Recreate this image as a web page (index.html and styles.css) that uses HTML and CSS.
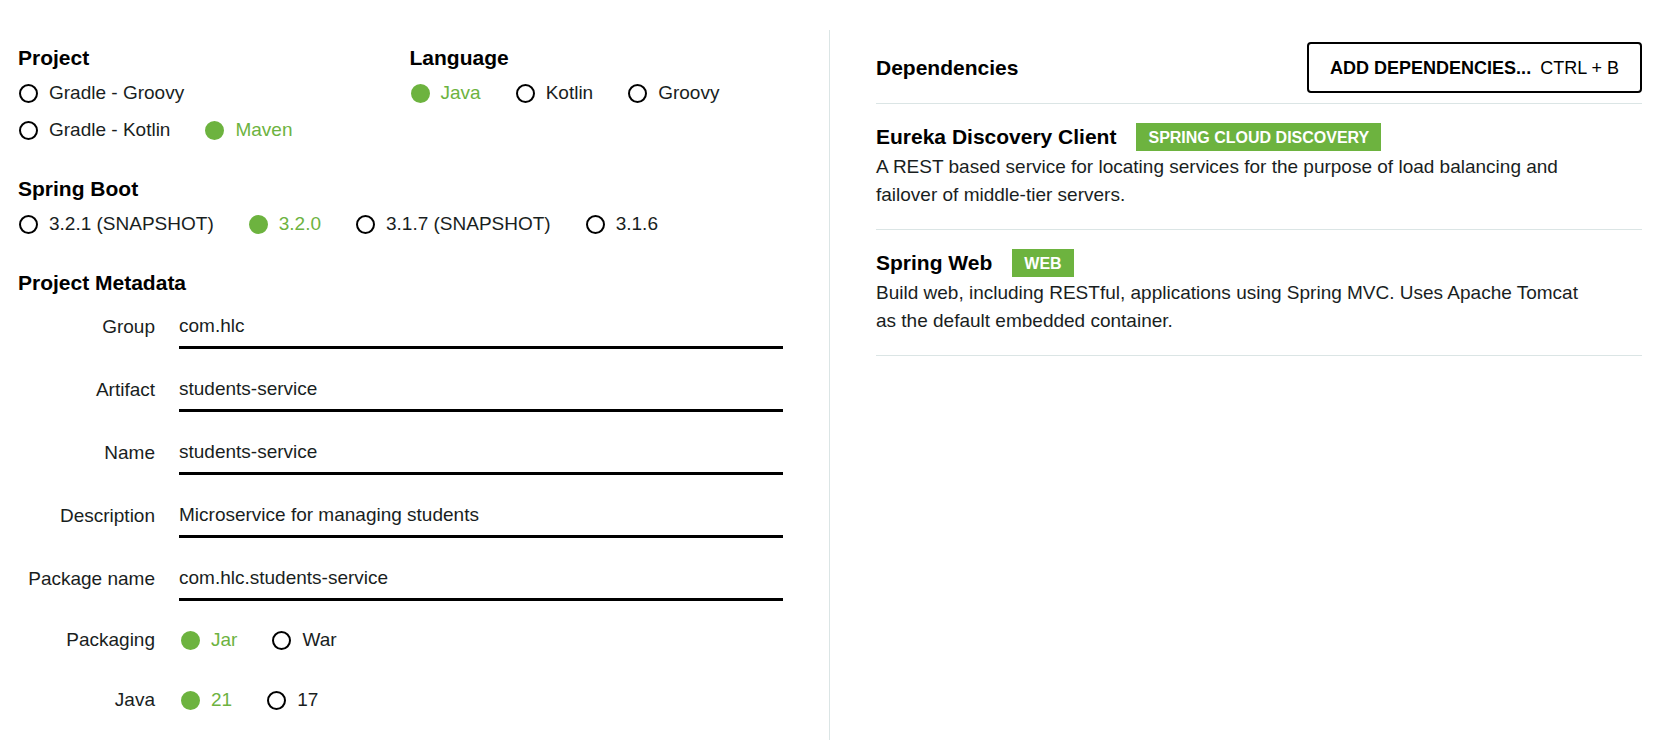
FILE: index.html
```html
<!DOCTYPE html>
<html lang="en">
<head>
<meta charset="utf-8">
<title>Spring Initializr</title>
<link rel="stylesheet" href="styles.css">
</head>
<body>
<main class="layout">
  <form class="settings">
    <div class="split">
      <fieldset class="group">
        <legend class="heading">Project</legend>
        <div class="options">
          <label class="option"><input type="radio" name="project"><span>Gradle - Groovy</span></label>
          <label class="option"><input type="radio" name="project"><span>Gradle - Kotlin</span></label>
          <label class="option"><input type="radio" name="project" checked><span>Maven</span></label>
        </div>
      </fieldset>
      <fieldset class="group">
        <legend class="heading">Language</legend>
        <div class="options">
          <label class="option"><input type="radio" name="language" checked><span>Java</span></label>
          <label class="option"><input type="radio" name="language"><span>Kotlin</span></label>
          <label class="option"><input type="radio" name="language"><span>Groovy</span></label>
        </div>
      </fieldset>
    </div>
    <fieldset class="group">
      <legend class="heading">Spring Boot</legend>
      <div class="options">
        <label class="option"><input type="radio" name="boot"><span>3.2.1 (SNAPSHOT)</span></label>
        <label class="option"><input type="radio" name="boot" checked><span>3.2.0</span></label>
        <label class="option"><input type="radio" name="boot"><span>3.1.7 (SNAPSHOT)</span></label>
        <label class="option"><input type="radio" name="boot"><span>3.1.6</span></label>
      </div>
    </fieldset>
    <section>
      <h2 class="heading">Project Metadata</h2>
      <div class="fields">
        <div class="field"><label class="field-label" for="group">Group</label><input class="text" id="group" type="text" value="com.hlc"></div>
        <div class="field"><label class="field-label" for="artifact">Artifact</label><input class="text" id="artifact" type="text" value="students-service"></div>
        <div class="field"><label class="field-label" for="name">Name</label><input class="text" id="name" type="text" value="students-service"></div>
        <div class="field"><label class="field-label" for="description">Description</label><input class="text" id="description" type="text" value="Microservice for managing students"></div>
        <div class="field"><label class="field-label" for="package">Package name</label><input class="text" id="package" type="text" value="com.hlc.students-service"></div>
        <div class="field choice" role="radiogroup" aria-labelledby="packaging-label">
          <span class="field-label" id="packaging-label">Packaging</span>
          <div class="options">
            <label class="option"><input type="radio" name="packaging" checked><span>Jar</span></label>
            <label class="option"><input type="radio" name="packaging"><span>War</span></label>
          </div>
        </div>
        <div class="field choice" role="radiogroup" aria-labelledby="java-label">
          <span class="field-label" id="java-label">Java</span>
          <div class="options">
            <label class="option"><input type="radio" name="java" checked><span>21</span></label>
            <label class="option"><input type="radio" name="java"><span>17</span></label>
          </div>
        </div>
      </div>
    </section>
  </form>
  <section class="dependencies">
    <header class="dep-header">
      <h2 class="heading">Dependencies</h2>
      <button class="add" type="button"><strong>Add dependencies...</strong><span>Ctrl + B</span></button>
    </header>
    <ul class="dep-list">
      <li class="dep">
        <div class="dep-title"><h3 class="heading">Eureka Discovery Client</h3><span class="tag">Spring Cloud Discovery</span></div>
        <p class="dep-text">A REST based service for locating services for the purpose of load balancing and failover of middle-tier servers.</p>
      </li>
      <li class="dep">
        <div class="dep-title"><h3 class="heading">Spring Web</h3><span class="tag">Web</span></div>
        <p class="dep-text">Build web, including RESTful, applications using Spring MVC. Uses Apache Tomcat as the default embedded container.</p>
      </li>
    </ul>
  </section>
</main>
</body>
</html>
```
FILE: styles.css
```css
:root {
  --green: #6db33f;
  --line: #dbe5e5;
  --text: #191e1e;
}

* {
  box-sizing: border-box;
}

body {
  margin: 0;
  background: #fff;
  color: var(--text);
  font: 19px/28px "Liberation Sans", Arial, sans-serif;
}

.layout {
  display: grid;
  grid-template-columns: 1fr 1fr;
  min-height: 100vh;
  padding: 30px 36px 0 18px;
}

.settings {
  padding: 14px 46px 16px 0;
  border-right: 1px solid var(--line);
}

.heading {
  margin: 0;
  padding: 0;
  color: #000;
  font-size: 21px;
  font-weight: bold;
  line-height: 28px;
}

.split {
  display: grid;
  grid-template-columns: 1fr 1fr;
  gap: 18px;
}

.group {
  min-width: 0;
  margin: 0 0 31px;
  padding: 0;
  border: 0;
}

.options {
  display: flex;
  flex-wrap: wrap;
  align-content: start;
  row-gap: 9px;
  padding-left: 1px;
}

.group .options {
  padding-top: 7px;
}

.option {
  display: flex;
  align-items: center;
  gap: 11px;
  margin-right: 35px;
  cursor: pointer;
}

.option input {
  appearance: none;
  width: 19px;
  height: 19px;
  margin: 0;
  border: 2px solid #000;
  border-radius: 50%;
}

.option input:checked {
  border-color: var(--green);
  background: var(--green);
}

.option input:checked + span {
  color: var(--green);
}

.fields {
  display: grid;
  gap: 25px;
  padding-top: 14px;
}

.field {
  display: grid;
  grid-template-columns: 137px 1fr;
  column-gap: 24px;
}

.choice {
  min-height: 35px;
}

.choice .options {
  padding-left: 2px;
}

.field-label {
  text-align: right;
}

label.field-label {
  padding-top: 2px;
}

.text {
  width: 100%;
  min-width: 0;
  height: 38px;
  padding: 1px 0 6px;
  border: 0;
  border-bottom: 3px solid #000;
  background: none;
  color: inherit;
  font: inherit;
}

.dependencies {
  min-width: 0;
  padding: 12px 0 20px 46px;
}

.dep-header {
  display: flex;
  align-items: center;
  justify-content: space-between;
  padding-bottom: 10px;
  border-bottom: 1px solid var(--line);
}

.add {
  display: flex;
  gap: 9px;
  padding: 10px 21px 9px;
  border: 2px solid #000;
  border-radius: 4px;
  background: #fff;
  color: #000;
  font: inherit;
  font-size: 18px;
  text-transform: uppercase;
}

.dep-list {
  margin: 0;
  padding: 0;
  list-style: none;
}

.dep {
  padding: 19px 50px 20px 0;
  border-bottom: 1px solid var(--line);
}

.dep-title {
  display: flex;
  align-items: center;
  gap: 20px;
}

.tag {
  padding: 2px 12px 0;
  background: var(--green);
  color: #fff;
  font-size: 16px;
  font-weight: bold;
  line-height: 26px;
  text-transform: uppercase;
}

.dep-text {
  margin: 2px 0 0;
}
```
